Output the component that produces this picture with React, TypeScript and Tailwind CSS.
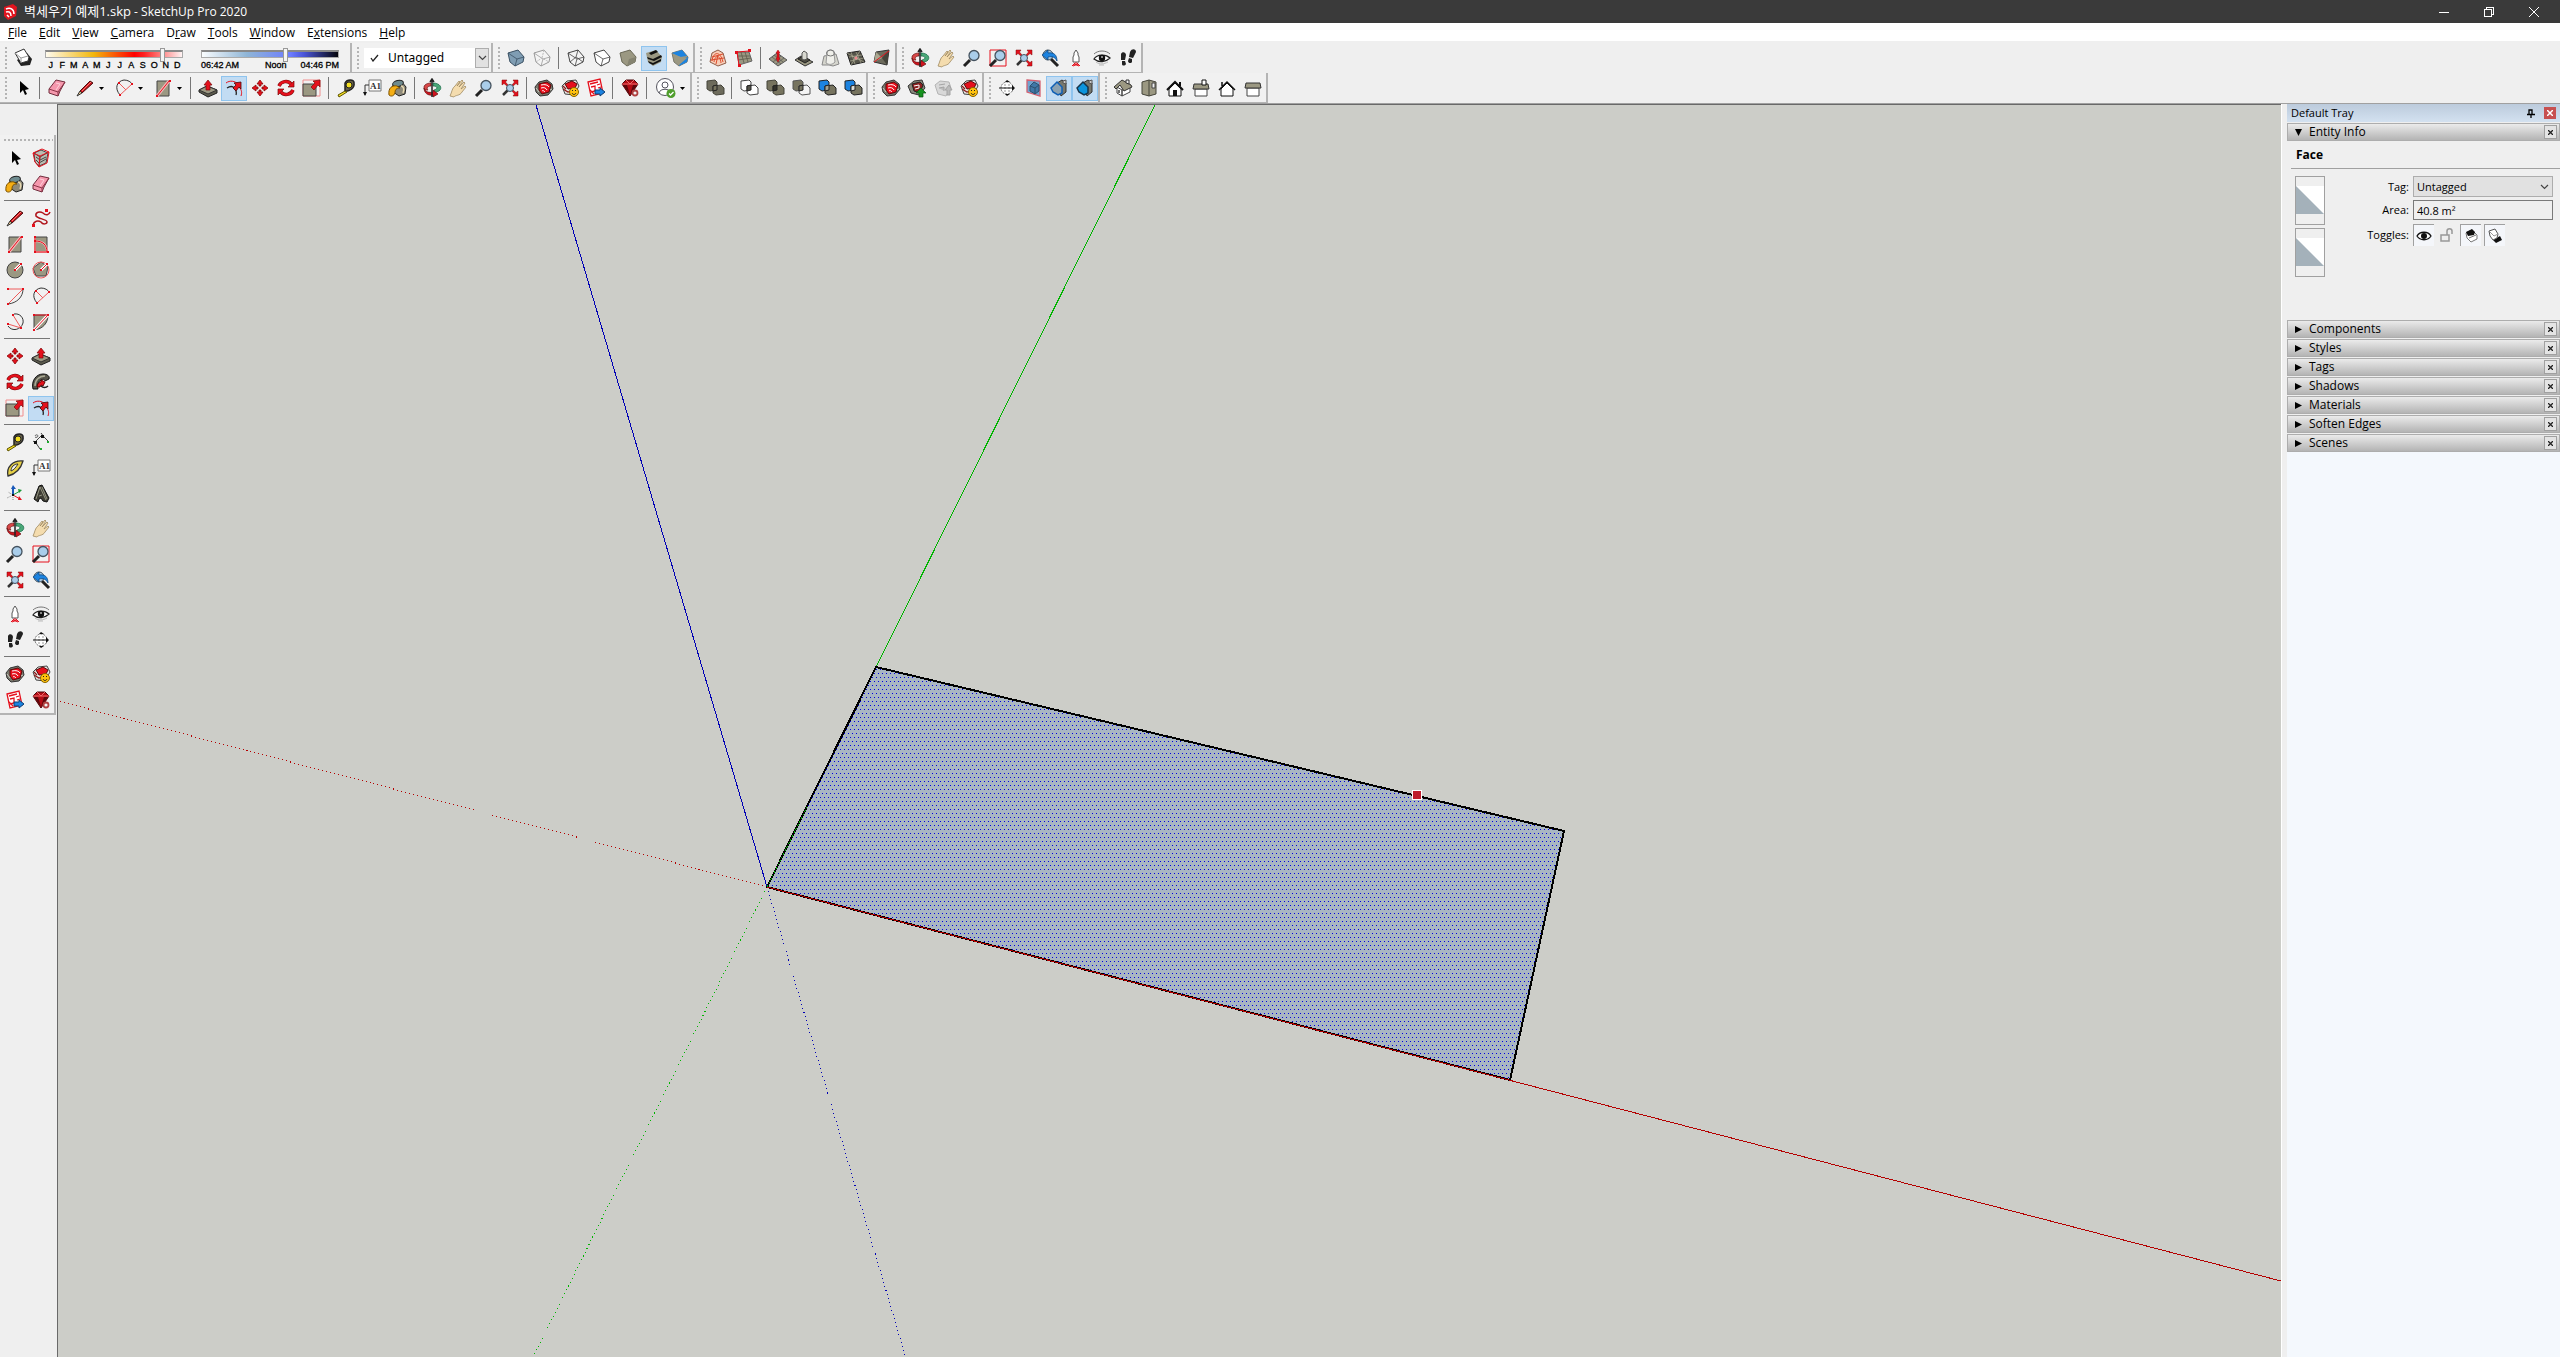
import { Fragment, ReactNode } from "react";
import { clsx } from "clsx";

const OLIVE = "#9b9882";
const RED = "#e5101c";

const warehouseRed = (
	<>
		<path d="M1 9l4-5 8-2 5 4 1 5-5 6-8 1-4-4z" fill="#77776c" stroke="#333" />
		<path d="M5 6l8-2 4 3-2 7-7 2-3-4z" fill={RED} stroke="#5c0a0a" />
		<path d="M7 7c4-1 7 0 8 2M7 10c3-1 5 0 6 2M8 13c1-1 2 0 3 1" stroke="#fff" />
		<path d="M2 10l3 4M16 12l2-1" stroke="#c9c9be" />
	</>
);

const smiley = (
	<>
		<circle cx="14" cy="14" r="4.5" fill="#ffc20e" stroke="#8a6500" />
		<path d="M12 15c1 2 3 2 4 0M12.500 12v1M15.500 12v1" stroke="#222" />
	</>
);

const lens = (
	<>
		<path d="M2 18l6-6" stroke="#222" strokeWidth="3" />
		<circle cx="12" cy="7.500" r="5" fill="#a9cdea" stroke="#44525e" strokeWidth="1.3" />
	</>
);

const cube = (fill: string, stroke: string) => (
	<>
		<path d="M2 5l10-3 6 7-1 5-8 4-5-4z" fill={fill} stroke={stroke} />
		<path d="M18 9l-7 2-2 7M11 11L2 5" stroke={stroke} strokeWidth="0.800" />
	</>
);

const solids = (back: string, front: string, middle: string, stroke: string) => (
	<>
		<path d="M2 3l8-1 2 2v8l-7 1-3-2z" fill={back} stroke={stroke} />
		<path d="M8 8l8-1 3 3v6l-8 1-3-2z" fill={front} stroke={stroke} />
		<path d="M8 8l4-1v5l-4 1z" fill={middle} stroke="#222" />
	</>
);

const houseCut = (fill: string, side: string) => (
	<>
		<path d="M8 5l5-3 4 3v9l-5 4z" fill="#77776c" stroke="#333" />
		<path d="M14 3l3-1v4l-3-1z" fill="#ccc" stroke="#555" />
		<path d="M2 10l6-6 5 5v6l-4 2-5-3z" fill={fill} stroke={side} strokeWidth="1.500" />
	</>
);

const icons: Record<string, ReactNode> = {
	shadow: (
		<>
			<path d="M4 12l10-7 5 6-2 6-9 1z" fill="#222" />
			<path d="M2 5l9-4 5 8-1 4-7 2z" fill="#fff" stroke="#333" />
			<path d="M2 5l6 5 7-2M8 10v5" stroke="#999" />
		</>
	),
	select: <path d="M7 3v12l3-3 2 5 2-1-2-4 4-1z" fill="#000" />,
	component: (
		<>
			<path d="M3 5l7-3 7 3-2 10-7 3-4-4z" fill="#bcbcb2" stroke="#444" />
			<path d="M3 5l6 4M16 5l-7 4-1 9M5 9l4 3 6-3M5 12l3 3 7-4" stroke="#444" />
			<path d="M2 5l9-4 7 3-2 11-8 4-4-5zM2 5l7 3 9-4M9 8l-1 11" stroke={RED} />
		</>
	),
	paint: (
		<>
			<path d="M5 7l8-4 5 6-1 7-6 2-6-4z" fill="#8d897a" stroke="#222" />
			<ellipse cx="10" cy="5.500" rx="5.500" ry="3" fill="#6e8b8f" stroke="#222" transform="rotate(-15 10 5.500)" />
			<path d="M1 17c-1-7 3-10 8-9l3 2c-4 0-5 2-5 5-1 3-4 4-6 2z" fill="#f5ae14" stroke="#7b5100" />
			<path d="M13 8c2 0 4 3 2 7" stroke="#e8d9b0" strokeWidth="1.500" />
		</>
	),
	eraser: (
		<>
			<path d="M9 2l9 2-5 9-2 5-9-3v-4z" fill="#f598ad" stroke="#702c3c" />
			<path d="M2 11l9 3 7-10M11 14v4" stroke="#8b3347" />
			<path d="M9 5l4 1-4 6" stroke="#ffd0da" />
		</>
	),
	pencil: (
		<>
			<path d="M5 13L15 3l3 2L7 15z" fill="#c8141e" stroke="#4b1010" />
			<path d="M2 18l3-5 2 2z" fill="#e8c58f" stroke="#333" />
			<path d="M7 13l9-9" stroke="#ff7a72" />
		</>
	),
	freehand: (
		<>
			<path d="M2 17c1-4 5-5 8-3 2 3 6 2 6 0 0-3-9-3-11-6-1-4 4-5 7-3 3 3 6 2 7-1" stroke="#b0151c" strokeWidth="1.500" />
			<path d="M1 16h3v3H1zM14 1h3v3h-3z" fill={RED} />
		</>
	),
	rect: (
		<>
			<path d="M4 3h12v15H4z" fill={OLIVE} stroke="#444" />
			<path d="M4 18L16 3" stroke="#f3b7b7" strokeWidth="3" />
			<path d="M4 18L16 3" stroke={RED} />
			<path d="M3 17h2v2H3zM16 2h2v2h-2z" fill={RED} />
		</>
	),
	rotrect: (
		<>
			<path d="M4 3h12v15H4z" fill={OLIVE} stroke="#444" />
			<path d="M4 3v15h13M4 7c8 0 12 4 12 11M4 7v11" stroke="#f3b7b7" strokeWidth="2" />
			<path d="M4 3v15h13M4 7c8 0 12 4 12 11" stroke={RED} />
			<path d="M3 2h2v2H3zM3 6h2v2H3zM3 17h2v2H3zM16 17h2v2h-2z" fill={RED} />
		</>
	),
	circle: (
		<>
			<circle cx="10" cy="10" r="8" fill={OLIVE} stroke="#444" />
			<path d="M10 10l6-6" stroke="#fff" strokeWidth="3" />
			<path d="M10 10l6-6" stroke={RED} />
			<path d="M9 9h2v2H9zM15 3h2v2h-2z" fill={RED} />
		</>
	),
	polygon: (
		<>
			<path d="M10 2l7 5-2 9H5L2 8z" fill={OLIVE} stroke="#444" />
			<circle cx="10" cy="10" r="8" stroke="#ee5a5a" />
			<path d="M10 10l6-6" stroke="#fff" strokeWidth="3" />
			<path d="M10 10l6-6" stroke={RED} />
			<path d="M9 9h2v2H9zM15 3h2v2h-2z" fill={RED} />
		</>
	),
	arc2: (
		<>
			<path d="M18 3c0 8-6 14-15 15" stroke="#444" />
			<path d="M3 3h15L3 18" stroke="#ee5a5a" />
			<path d="M2 2h2v2H2zM17 2h2v2h-2zM2 17h2v2H2z" fill={RED} />
		</>
	),
	arc: (
		<>
			<path d="M6 17C0 10 3 3 10 2c4 0 7 2 8 4" stroke="#333" />
			<path d="M6 17L18 6M5 5l7 7" stroke="#ee5a5a" />
			<path d="M5 16h2v2H5zM17 5h2v2h-2zM4 4h2v2H4z" fill={RED} />
		</>
	),
	arc3: (
		<>
			<path d="M9 2c6-1 10 4 9 9-2 7-11 9-15 3" stroke="#333" />
			<path d="M3 12l13 4L8 3" stroke="#ee5a5a" />
			<path d="M2 11h2v2H2zM7 2h2v2H7zM15 15h2v2h-2z" fill={RED} />
		</>
	),
	pie: (
		<>
			<path d="M3 3h14c0 8-5 14-14 15z" fill={OLIVE} stroke="#444" />
			<path d="M3 18L17 3" stroke="#fff" strokeWidth="3" />
			<path d="M3 3h14L3 18" stroke={RED} />
			<path d="M2 2h2v2H2zM16 2h2v2h-2zM2 17h2v2H2z" fill={RED} />
		</>
	),
	move: (
		<path
			d="M10 2l3 4h-2v2H9V6H7zM10 18l3-4h-2v-2H9v2H7zM2 10l4-3v2h2v2H6v2zM18 10l-4-3v2h-2v2h2v2z"
			fill={RED}
			stroke="#8c0a0a"
			strokeWidth="0.800"
		/>
	),
	pushpull: (
		<>
			<path d="M1 12l8-4 10 4v3l-9 4-9-5z" fill="#5b5a4c" stroke="#222" />
			<path d="M1 12l8-4 10 4-9 4z" fill={OLIVE} stroke="#333" />
			<path d="M10 2l4 5h-2v5H8V7H6z" fill={RED} stroke="#7a0a0a" strokeWidth="0.700" />
		</>
	),
	rotate: (
		<>
			<path d="M3 8c2-5 9-6 12-2M17 12c-2 5-9 6-12 2" stroke="#7a0a0a" strokeWidth="3.500" />
			<path d="M18 3v6h-6zM2 17v-6h6z" fill={RED} stroke="#7a0a0a" strokeWidth="0.700" />
			<path d="M3 8c2-5 9-6 12-2M17 12c-2 5-9 6-12 2" stroke={RED} strokeWidth="2.300" />
		</>
	),
	followme: (
		<>
			<path d="M2 17C0 9 5 2 12 2c4 0 7 2 6 5l-4 2c0-2-2-2-4-1-3 2-4 5-3 9z" fill="#55544a" stroke="#111" />
			<path d="M4 14C4 8 8 4 14 4" stroke="#aaa994" strokeWidth="1.500" />
			<path d="M6 15c0-3 2-5 4-5V8l4 2-2 4-2-1-1 2z" fill={RED} stroke="#600" />
			<path d="M10 14c2 2 5 2 7 0" stroke="#222" strokeWidth="1.500" />
		</>
	),
	scale: (
		<>
			<path d="M1 2h17v16H1z" stroke="#f08d8d" />
			<path d="M1 6h13v12H1z" fill={OLIVE} stroke="#444" />
			<path d="M18 2v7l-2-2-4 5-3-3 4-4-2-2z" fill={RED} stroke="#7a0a0a" strokeWidth="0.700" />
		</>
	),
	offset: (
		<>
			<path d="M2 5c4-3 9-2 12 1M15 9c3 3 3 6 2 9" stroke={RED} />
			<path d="M3 10c3-2 6-2 7 0 2 2 3 4 2 7" stroke="#222" strokeWidth="1.300" />
			<path d="M17 4v7l-2-2-3 4-3-3 3-3-2-2z" fill={RED} stroke="#4c0808" strokeWidth="0.800" />
		</>
	),
	tape: (
		<>
			<path d="M9 5c2-4 9-4 9 0 1 5-5 9-9 8z" fill="#66604a" stroke="#222" strokeWidth="1.500" />
			<circle cx="13" cy="7" r="3" fill="#f4df22" stroke="#222" />
			<path d="M2 17l7-4 2 1-8 5z" fill="#f4df22" stroke="#5c5200" />
		</>
	),
	dimension: (
		<>
			<path d="M4 10l7-7M2 9l4 3M10 1l3 4M5 11l4 6M12 4l5 5" stroke="#444" />
			<path d="M3 9h3v3H3zM10 3h3v3h-3z" fill="#111" />
			<path d="M9 16h2v2H9zM16 9h2v2h-2z" fill="#1faa30" />
			<path d="M4 4c1-2 3-1 3 0s-2 2-3 1" stroke="#555" />
		</>
	),
	protractor: (
		<>
			<path d="M3 18C1 9 8 2 18 3c-2 7-7 13-15 15z" fill="#e5cf45" stroke="#333" strokeWidth="1.300" />
			<path d="M6 13c0-4 3-7 7-7-2 3-4 6-7 7z" fill="#f1f1f1" stroke="#333" />
		</>
	),
	text: (
		<>
			<path d="M7 2h12v11H7z" fill="#fff" stroke="#777" />
			<path d="M7 7H3v10" stroke="#333" />
			<path d="M1 14h4l-2 4z" fill="#111" />
			<text x="8" y="11" fontSize="9" fontFamily="Liberation Serif" fontWeight="700" fill="#333">
				A1
			</text>
		</>
	),
	axes: (
		<>
			<path d="M8 11V4" stroke="#1959b8" strokeWidth="2" />
			<path d="M6 5l2-4 3 4z" fill="#1959b8" />
			<path d="M8 11l7-4" stroke="#1a9a37" />
			<path d="M8 11l7 4" stroke={RED} />
			<path d="M8 11l-6 3M8 11L3 8M8 11v6" stroke="#888" strokeDasharray="1 1" />
			<path d="M13 5l4 1-3 3z" fill="#1a9a37" />
			<path d="M14 12l3 4h-4z" fill={RED} />
			<path d="M7 10h2v2H7z" fill="#111" />
		</>
	),
	text3d: (
		<>
			<path d="M3 15L8 2l3-1 7 13-2 4-4-1-2-3-2 1-1 3z" fill="#3f3e35" stroke="#111" />
			<path d="M5 15L9 3l6 13M8 12l3-1M11 3l5 12" stroke="#aaa994" strokeWidth="0.800" />
		</>
	),
	orbit: (
		<>
			<path d="M3 12c-3-4 1-7 6-7v3c-3 0-5 2-3 4z" fill="#d84848" stroke="#611" strokeWidth="0.700" />
			<path d="M11 5c7 0 10 5 6 8l-5 2v-3c4-1 4-4-1-4z" fill="#4aa878" stroke="#164" strokeWidth="0.700" />
			<path d="M2 10c1 4 5 5 9 4v-2l5 4-5 3v-2C6 18 2 15 2 10z" fill="#d0141e" stroke="#611" strokeWidth="0.700" />
			<path d="M10 2v17M8 4l2-3 2 3" stroke="#222" strokeWidth="1.500" />
		</>
	),
	pan: (
		<path
			d="M2 18c2-4 2-8 5-10l4-5 1 1-3 4 5-6 1 1-4 6 5-5 1 1-4 6 4-3 1 1-4 5c-2 4-7 3-8 5z"
			fill="#f4dcae"
			stroke="#a08a62"
			strokeWidth="0.800"
		/>
	),
	zoom: lens,
	zoomwindow: (
		<>
			<path d="M2 2h16v16H2z" stroke={RED} />
			{lens}
		</>
	),
	zoomextents: (
		<>
			<path d="M3 17l5-5" stroke="#333" strokeWidth="2.500" />
			<path d="M2 2h5L5.500 4 8 7 7 8 4 5.500 2 7zM18 2h-5l1.500 2L12 7l1 1 3-2.500L18 7zM18 18h-5l1.500-2L12 13l1-1 3 2.500 2-1.500z" fill={RED} stroke="#7a0a0a" strokeWidth="0.500" />
			<circle cx="10" cy="10" r="3.500" fill="#a9cdea" stroke="#44525e" />
		</>
	),
	previous: (
		<>
			<path d="M11 11l7 7" stroke="#222" strokeWidth="3" />
			<circle cx="8" cy="7" r="5" fill="#a9cdea" stroke="#44525e" />
			<path d="M2 7l6-5v3c6-1 9 2 9 8-2-4-5-5-9-4v3z" fill="#1c83e0" stroke="#0b4176" strokeWidth="0.700" />
		</>
	),
	position: (
		<>
			<path d="M10 2l2 3v2l1 2v5H7V9l1-2V5z" fill="#fff" stroke="#555" />
			<path d="M6 18l3-3h2l3 3M8 16l5 2M12 16l-5 2" stroke={RED} />
		</>
	),
	look: (
		<>
			<path d="M2 6c4-4 12-4 16 0" stroke="#777" />
			<path d="M2 11c3-5 12-5 16-1-4 4-11 5-16 1z" fill="#fff" stroke="#222" strokeWidth="1.300" />
			<circle cx="10" cy="10" r="3.200" fill="#111" />
			<path d="M4 14c4 3 8 2 12 0M7 17h5" stroke="#bbb" />
			<path d="M9 9h2" stroke="#fff" />
		</>
	),
	walk: (
		<path
			d="M3 6c1-3 5-2 5 1l-1 5H3zM4 13h3l1 3c-1 2-4 2-4 0zM12 4c2-4 6-3 6 0l-3 6-4-1zM11 10l3 1v3c-1 2-4 1-4-1z"
			fill="#222"
		/>
	),
	section: (
		<>
			<circle cx="10" cy="10" r="6" fill="#fff" stroke="#666" strokeDasharray="2 1" />
			<path d="M8 6v8M12 6v8" stroke="#999" strokeDasharray="2 1" />
			<path d="M2 10h15" stroke="#111" />
			<path d="M15 7l3 3-3 3zM8 4l2-2 3 2zM8 16l2 2 3-2z" fill="#111" />
		</>
	),
	warehouse: warehouseRed,
	extension: (
		<>
			<path d="M2 8l5-5 9-1 3 6-5 9-9-1z" fill="#e4e4e0" stroke="#444" />
			<path d="M5 6l7-3 5 3-2 4-7 1z" fill={RED} stroke="#5c0a0a" />
			<path d="M3 11l5 3 3-1M3 8l3 3" stroke="#8c1a1a" strokeWidth="1.300" />
			{smiley}
		</>
	),
	layout: (
		<>
			<path d="M2 4l12-3 3 14-12 3z" fill="#fff" stroke={RED} strokeWidth="1.300" />
			<path d="M4 6l8-2M5 9l4-1v5l-4 1M11 7l3-1M12 10l3-1M4 12l4 4" stroke={RED} strokeWidth="1.300" />
			<path d="M9 12h5v-2l5 4-5 4v-2H9z" fill="#1c83e0" stroke="#0b4176" />
		</>
	),
	ruby: (
		<>
			<path d="M2 6l4-4h8l4 4-8 12z" fill="#b40d16" stroke="#4d0508" />
			<path d="M2 6h16M6 2l4 4 4-4" stroke="#f16b6b" />
			<path d="M3 7h4l3 10zM13 7h4l-7 10z" fill="#5e070b" />
			<circle cx="15" cy="15" r="2.500" fill="#f1f1f1" stroke="#b04040" strokeWidth="1.800" />
		</>
	),
	user: (
		<>
			<circle cx="9" cy="9" r="8.500" fill="#fff" stroke="#55555f" />
			<circle cx="9" cy="7" r="3" stroke="#55555f" />
			<path d="M3 15c1-5 11-5 12 0" stroke="#55555f" />
			<circle cx="15" cy="15.500" r="4.500" fill="#4f9e2c" />
			<path d="M13 15.500l1.500 1.500 3-3" stroke="#fff" strokeWidth="1.300" />
		</>
	),
	xray: cube("#7f9db3", "#3b5163"),
	backedges: (
		<>
			{cube("#f4f4f4", "#999")}
			<path d="M4 14l6-4 7 4M12 2l-2 8" stroke="#bbb" strokeDasharray="2 1" />
		</>
	),
	wireframe: (
		<>
			{cube("#f4f4f4", "#444")}
			<path d="M4 14l6-5 7 5M12 2l-2 7" stroke="#444" strokeWidth="0.800" />
		</>
	),
	hidden: cube("#fff", "#444"),
	shaded: (
		<>
			<path d="M2 5l10-3 6 7-1 5-8 4-5-4z" fill={OLIVE} stroke="#6a6857" />
			<path d="M18 9l-7 2-2 7 8-4z" fill="#858370" />
		</>
	),
	textured: (
		<>
			<path d="M2 5l10-3 6 7-1 5-8 4-5-4z" fill={OLIVE} />
			<path d="M5 5l7-3 2 2-7 3zM3 9l6 2 8-4 1 2-8 4-6-2zM4 13l5 2 8-4v2l-8 4-4-2z" fill="#111" />
		</>
	),
	mono: (
		<>
			<path d="M2 5l10-3 6 7-1 5-8 4-5-4z" fill={OLIVE} stroke="#77776c" />
			<path d="M2 5l10-3 5 6-7 1z" fill="#1c83e0" />
			<path d="M18 9l-7 2-2 7 8-4z" fill="#1c83e0" />
			<path d="M3 6l8 3 6 1-8 7-4-3z" fill={OLIVE} />
		</>
	),
	contours: (
		<>
			<path d="M2 14l2-9 6-3 5 3 3 10-8 3z" fill="#f7cdb7" stroke="#8f5c48" />
			<path d="M4 13c1-9 8-11 11 1M6 14c1-7 6-8 7 1M4 9l11-3M3 12l13-2M8 16l2-9" stroke="#dc4a2a" />
		</>
	),
	scratch: (
		<>
			<path d="M3 4h12l3 9-13 4z" fill={OLIVE} stroke="#666" />
			<path d="M7 4l3 11M11 4l3 10M4 8h12M4 12l13-2" stroke="#5e5c4d" strokeWidth="0.800" />
			<path d="M5 17L3 4l12-1" stroke={RED} />
			<path d="M1 3h3v3H1zM14 1h3v3h-3zM4 16h3v3H4z" fill={RED} />
		</>
	),
	smoove: (
		<>
			<path d="M1 11l8-6 10 7-9 6z" fill={OLIVE} stroke="#555" />
			<path d="M4 9l9 7M6 7l9 7M5 14l8-6M8 16l8-6" stroke="#555" strokeWidth="0.700" />
			<path d="M10 2l2 3h-1v5h1l-2 4-2-4h1V5H8z" fill={RED} stroke="#a00a0a" strokeWidth="0.500" />
		</>
	),
	stamp: (
		<>
			<path d="M1 12l6-4 12 6-8 4z" fill={OLIVE} stroke="#333" />
			<path d="M4 11l5-3 7 4-5 3z" fill="#4d4b40" stroke="#222" />
			<path d="M8 11V5l2-2 3 2v6l-3 1z" fill="#d8d8d0" stroke="#555" />
		</>
	),
	drape: (
		<>
			<path d="M2 17l2-9 12-2 3 10-6 2-4-1z" fill="#d5d5cd" stroke="#888" />
			<path d="M6 15l1-10c1-4 6-4 7 0l1 9c-3 3-6 3-9 1z" fill="#efefea" stroke="#999" />
			<ellipse cx="10.500" cy="5" rx="4" ry="3" stroke="#777" />
		</>
	),
	adddetail: (
		<>
			<path d="M1 5l13-2 5 11-14 3z" fill="#55544a" stroke="#222" />
			<path d="M3 9l13-2M4 13l14-3M5 4l4 12M10 4l5 11M1 5l17 9M14 3L5 17" stroke="#b7b59c" strokeWidth="0.600" />
			<path d="M9 9h2v2H9z" fill={RED} stroke="#f0b0b0" />
		</>
	),
	flip: (
		<>
			<path d="M4 4l13-2-2 15-13-3z" fill="#6d6b5c" stroke="#333" />
			<path d="M4 4l6 6-8 4z" fill="#aaa78f" />
			<path d="M17 2l-2 15-5-7z" fill="#45443a" />
			<path d="M2 14L17 3" stroke={RED} />
		</>
	),
	outer: solids("#6d6b5c", "#6d6b5c", "#77745f", "#45443a"),
	intersect: solids("#fff", "#fff", "#55544a", "#444"),
	union: solids("#77745f", "#77745f", "#33322b", "#45443a"),
	subtract: solids("#77745f", "#f4f4f4", "#77745f", "#555"),
	trim: solids("#1c83e0", "#77745f", "#a5a390", "#222"),
	split: solids("#1c83e0", "#77745f", "#e0e0d8", "#222"),
	sharemodel: (
		<>
			<path d="M1 8l6-5 8-1 3 8-6 7-8-2z" fill="#88877b" stroke="#333" />
			<path d="M5 6l8-2 3 3-3 8-6-2z" fill="#8b2020" stroke="#222" />
			<path d="M7 8l5-1v3l-4 1" stroke="#fff" />
			<path d="M14 10l5 5h-3v4h-4v-4h-3z" fill="#16931f" stroke="#0c4f11" strokeWidth="0.700" />
		</>
	),
	sharecomponent: (
		<>
			<path d="M2 7l5-4 9 1 2 6-5 8-8-2z" fill="#d8d8d8" stroke="#b4b4b4" />
			<path d="M6 7l6-1M6 10l5-1v4M14 17v-5h-2l4-5 3 5h-2v5z" fill="#bbb" stroke="#a4a4a4" />
		</>
	),
	planes: (
		<>
			<path d="M4 2l13 1v15L4 14z" fill="#6fa3cf" stroke="#d36070" strokeWidth="1.300" />
			<path d="M7 8l4-4 5 3v6l-4 3-5-3z" fill="#3f77a6" stroke="#2d506e" />
			<path d="M7 8l5 2v6M12 10l4-3" stroke="#2d506e" />
		</>
	),
	cuts: houseCut("#8ba1b0", "#0f5fb5"),
	cutfill: houseCut("#0c94dc", "#17344a"),
	iso: (
		<>
			<path d="M4 9l5 3v6l-5-3zM9 12l8-3v5l-8 4z" fill="#fff" stroke="#444" />
			<path d="M1 9l8-7 9 5 1 2-8 4-4-6-4 4z" fill={OLIVE} stroke="#333" />
			<path d="M13 2h3v4l-3-1z" fill="#eee" stroke="#333" />
			<path d="M6 12v3" stroke="#444" strokeWidth="1.500" />
		</>
	),
	top: (
		<>
			<path d="M3 4l7-2 7 2v12l-7 2-7-2z" fill={OLIVE} stroke="#45443a" />
			<path d="M10 2v16" stroke="#45443a" />
			<path d="M13 5h3v5h-3z" fill="#eee" stroke="#444" />
		</>
	),
	front: (
		<>
			<path d="M4 11l6-6 6 6v7H4z" fill="#fff" stroke="#111" />
			<path d="M2 12l8-8 8 8" stroke="#111" strokeWidth="2" />
			<path d="M8 12h4v6H8zM14 4h2v4h-2z" fill="#111" />
		</>
	),
	right: (
		<>
			<path d="M4 11h12v7H4z" fill="#fff" stroke="#444" />
			<path d="M3 6h14l1 5H2z" fill={OLIVE} stroke="#333" />
			<path d="M11 2h4v5h-4z" fill="#fff" stroke="#111" />
		</>
	),
	back: (
		<>
			<path d="M4 11l6-6 6 6v7H4z" fill="#fff" stroke="#111" />
			<path d="M2 12l8-8 8 8M5 8V4" stroke="#111" strokeWidth="1.500" />
		</>
	),
	left: (
		<>
			<path d="M4 10h12v8H4z" fill="#fff" stroke="#444" />
			<path d="M3 5h14l1 5H2z" fill={OLIVE} stroke="#333" />
		</>
	),
};

// "|" is a separator, "!" marks the active tool, "+" a tool with a menu
const rowTwoTools = [
	"select | eraser pencil+ arc+ rect+ | pushpull offset! move rotate scale | tape text paint | orbit pan zoom zoomextents | warehouse extension layout | ruby | user+",
	"outer | intersect union subtract trim split",
	"warehouse sharemodel sharecomponent extension",
	"section planes cuts! cutfill!",
	"iso top front right back left",
];

const rowOneTools = [
	"xray backedges | wireframe hidden shaded textured! mono",
	"contours scratch | smoove stamp drape adddetail flip",
	"orbit pan zoom zoomwindow zoomextents previous position look walk",
];

const sideTools = [
	"select component paint eraser",
	"pencil freehand rect rotrect circle polygon arc2 arc arc3 pie",
	"move pushpull rotate followme scale offset!",
	"tape dimension protractor text axes text3d",
	"orbit pan zoom zoomwindow zoomextents previous",
	"position look walk section",
	"warehouse extension layout ruby",
];

const menus = [
	["", "F", "ile"],
	["", "E", "dit"],
	["", "V", "iew"],
	["", "C", "amera"],
	["D", "r", "aw"],
	["", "T", "ools"],
	["", "W", "indow"],
	["E", "x", "tensions"],
	["", "H", "elp"],
];

const panels = ["Components", "Styles", "Tags", "Shadows", "Materials", "Soften Edges", "Scenes"];

const gripDots = "bg-[radial-gradient(#b4b4b4_1px,transparent_1px)] bg-[size:4px_4px]";

function Tool({ tool }: { tool: string }) {
	const name = tool.replace(/[+!]/, "");
	const active = tool.endsWith("!");
	const menu = tool.endsWith("+");
	return (
		<button
			type="button"
			aria-label={name}
			aria-pressed={active}
			className={clsx(
				"flex h-[25px] shrink-0 items-center justify-center",
				menu ? "w-[39px] gap-1" : "w-[26px]",
				active && "border border-[#8fc4ee] bg-[#c2dcf3]"
			)}
		>
			<svg width="20" height="20" viewBox="0 0 20 20" fill="none" className="shrink-0">
				{icons[name]}
			</svg>
			{menu && (
				<svg width="5" height="3" viewBox="0 0 5 3">
					<path d="M0 0h5L2.500 3z" />
				</svg>
			)}
		</button>
	);
}

function ToolGroup({ children }: { children: ReactNode }) {
	return (
		<div className="flex h-[30px] items-center border-r-2 border-b border-[#b4b4b4] bg-[#f1f1f1] pt-px">
			<div className={clsx("mr-[2px] ml-1 h-[25px] w-1 shrink-0", gripDots)} />
			{children}
		</div>
	);
}

function Tools({ list }: { list: string }) {
	return (
		<ToolGroup>
			{list.split(" ").map((tool, i) =>
				tool === "|" ? (
					<div key={i} className="mr-1 ml-[3px] h-[22px] w-px bg-[#777]" />
				) : (
					<Tool key={i} tool={tool} />
				)
			)}
		</ToolGroup>
	);
}

interface ISunSliderProps {
	label: string;
	value: number;
	track: string;
	children: ReactNode;
}

function SunSlider({ label, value, track, children }: ISunSliderProps) {
	return (
		<div className="flex w-[138px] flex-col gap-[2px]">
			<input
				type="range"
				aria-label={label}
				defaultValue={value}
				className={clsx(
					"h-2 w-full appearance-none border border-t-2 border-[#aaa] border-t-[#888]",
					"[&::-webkit-slider-thumb]:h-[14px] [&::-webkit-slider-thumb]:w-[5px] [&::-webkit-slider-thumb]:appearance-none [&::-webkit-slider-thumb]:border [&::-webkit-slider-thumb]:border-[#999] [&::-webkit-slider-thumb]:bg-[#f4f4f4]",
					track
				)}
			/>
			<div className="flex h-[10px] justify-between font-['Liberation_Sans',sans-serif] text-[9px] leading-[10px] [-webkit-text-stroke:0.3px_#000]">
				{children}
			</div>
		</div>
	);
}

function Chevron() {
	return (
		<svg width="9" height="6" viewBox="0 0 9 6" fill="none" className="pointer-events-none">
			<path d="M1 1l3.500 3.500L8 1" stroke="#444" strokeWidth="1.200" />
		</svg>
	);
}

function PanelHeader({ title, open }: { title: string; open?: boolean }) {
	return (
		<div className="flex h-[18px] items-center border border-[#adadad] bg-linear-to-b from-[#ebebeb] to-[#b4b4b4] pr-[2px]">
			<button type="button" aria-expanded={!!open} className="flex flex-1 items-center gap-[7px] pl-[7px] text-[12px] leading-4">
				<svg width="7" height="7" viewBox="0 0 7 7">
					<path d={open ? "M0 0h7L3.500 7z" : "M0 0l7 3.500L0 7z"} />
				</svg>
				{title}
			</button>
			<button
				type="button"
				aria-label={`Close ${title}`}
				className="flex h-[14px] w-[13px] items-center justify-center border border-[#a0a0a0] bg-[#e4e4e4]"
			>
				<svg width="5" height="5" viewBox="0 0 5 5">
					<path d="M0 0l5 5M5 0L0 5" stroke="#222" strokeWidth="1.300" />
				</svg>
			</button>
		</div>
	);
}

function Swatch({ label }: { label: string }) {
	return (
		<button type="button" aria-label={label} className="h-[49px] w-[30px] border border-[#a0a0a0] bg-[#efefef]">
			<svg width="28" height="47" viewBox="0 0 28 47">
				<path d="M0 9h28v28H0z" fill="#fff" />
				<path d="M0 9l28 28H0z" fill="#a4b1ba" />
			</svg>
		</button>
	);
}

const pressed = "border-t border-l border-[#a0a0a0] bg-[#f4f6fa] px-[2px]";

function EntityInfo() {
	return (
		<div className="flex h-[179px] flex-col pl-1">
			<h2 className="flex h-7 items-center border-b border-[#a0a0a0] pl-[5px] text-[12px] font-bold">Face</h2>
			<div className="flex items-start pt-[7px] pr-[7px] pl-1">
				<div className="flex flex-col gap-[3px]">
					<Swatch label="Front material" />
					<Swatch label="Back material" />
				</div>
				<div className="ml-auto grid grid-cols-[auto_140px] items-center gap-x-1 gap-y-[3px] text-right text-[11px] leading-4">
					<label htmlFor="tag">Tag:</label>
					<div className="relative flex h-[21px] items-center">
						<select
							id="tag"
							className="h-full w-full appearance-none border border-[#adadad] bg-[#e1e1e1] pl-[3px] text-left"
						>
							<option>Untagged</option>
						</select>
						<div className="pointer-events-none absolute right-1">
							<Chevron />
						</div>
					</div>
					<label htmlFor="area">Area:</label>
					<input
						id="area"
						readOnly
						defaultValue="40.8 m²"
						className="h-5 w-full border border-[#7a7a7a] bg-[#efefef] pl-[3px]"
					/>
					<span>Toggles:</span>
					<div className="mt-px flex h-[22px] gap-[3px]">
						<button type="button" aria-label="Hide" className={pressed}>
							<svg width="16" height="16" viewBox="0 0 16 16" fill="none">
								<path d="M1 8c3-5 11-5 14 0-3 5-11 5-14 0z" fill="#fff" stroke="#111" strokeWidth="1.300" />
								<circle cx="8" cy="8" r="3" fill="#111" />
							</svg>
						</button>
						<button type="button" aria-label="Lock" className="px-[2px]">
							<svg width="16" height="16" viewBox="0 0 16 16" fill="none">
								<path d="M2 8h8v6H2zM8 8V4c0-3 5-3 5 0v3" stroke="#999" strokeWidth="1.500" />
							</svg>
						</button>
						<button type="button" aria-label="Receive shadows" className={pressed}>
							<svg width="16" height="16" viewBox="0 0 16 16" fill="none">
								<path d="M3 5l6-3 5 5v4l-6 3-4-4z" fill="#fff" stroke="#777" />
								<path d="M3 4l6-3 3 3-1 3-6 1z" fill="#111" />
								<path d="M6 10l7-3" stroke="#777" />
							</svg>
						</button>
						<button type="button" aria-label="Cast shadows" className={pressed}>
							<svg width="16" height="16" viewBox="0 0 16 16" fill="none">
								<path d="M6 12l7-4 2 4-6 3z" fill="#111" />
								<path d="M2 3l6-2 3 5-1 4-4 2-3-4z" fill="#fff" stroke="#555" />
								<path d="M3 4l4 4 4-2" stroke="#999" />
							</svg>
						</button>
					</div>
				</div>
			</div>
		</div>
	);
}

function Viewport() {
	return (
		<main className="relative min-w-0 flex-1 overflow-hidden border-t border-l border-[#696969] bg-[#cccdc8]">
			<svg className="absolute inset-0 h-full w-full" fill="none" shapeRendering="crispEdges">
				<defs>
					<pattern id="selected" width="4" height="8" patternUnits="userSpaceOnUse">
						<rect width="4" height="8" fill="#a9b6c2" />
						<path d="M0 0h1v1H0zM2 4h1v1H2z" fill="#0000e0" />
					</pattern>
				</defs>
				<path d="M709 782L0 596" stroke="#b40000" strokeDasharray="1 3.100" />
				<path d="M709 782L475 1252" stroke="#00b400" strokeDasharray="1 3.200" />
				<path d="M709 782l138 468" stroke="#0000b4" strokeDasharray="1 3.200" />
				<path d="M709 782L478 0" stroke="#0000b4" />
				<path d="M709 782L1097 0" stroke="#00b400" />
				<path d="M709 782l109-220 688 164-54 249z" fill="url(#selected)" stroke="#000" strokeWidth="2" />
				<path d="M709 782l1514 394" stroke="#b40000" />
				<path d="M709 782l40-80" stroke="#00b400" strokeDasharray="2 2" />
				<path d="M1354 685h10v10h-10z" fill="#fff" />
				<path d="M1355 686h8v8h-8z" fill="#be1e2d" />
			</svg>
		</main>
	);
}

export default function App() {
	return (
		<div className="flex min-h-screen flex-col bg-[#efefef] font-['Open_Sans','Noto_Sans_CJK_KR',sans-serif] text-[12px] text-black">
			<header className="flex h-[23px] items-center bg-[#3a3a3a] text-white">
				<svg width="14" height="16" viewBox="0 0 14 16" fill="none" className="ml-[3px]">
					<path d="M1 3l9-3 4 3-1 9-8 4-4-4z" fill="#e0141e" />
					<path d="M3 5c4-2 8 0 8 5M3 8c3-1 5 0 5 4M4 11l2 2" stroke="#fff" strokeWidth="1.500" />
				</svg>
				<h1 className="ml-[7px] text-[12px] leading-5">
					<span className="text-[13px]">벽세우기 예제1.skp</span> - SketchUp Pro 2020
				</h1>
				<div className="ml-auto flex pr-1">
					<button type="button" aria-label="Minimize" className="flex h-5 w-[45px] items-center justify-center">
						<svg width="10" height="10" viewBox="0 0 10 10">
							<path d="M0 5h10v1H0z" fill="#fff" />
						</svg>
					</button>
					<button type="button" aria-label="Restore" className="flex h-5 w-[45px] items-center justify-center">
						<svg width="10" height="10" viewBox="0 0 10 10" fill="none" stroke="#fff" shapeRendering="crispEdges">
							<path d="M0.500 2.500h7v7h-7zM2.500 2.500v-2h7v7h-2" />
						</svg>
					</button>
					<button type="button" aria-label="Close" className="flex h-5 w-[45px] items-center justify-center">
						<svg width="10" height="10" viewBox="0 0 10 10" stroke="#fff">
							<path d="M0 0l10 10M10 0L0 10" />
						</svg>
					</button>
				</div>
			</header>
			<nav className="flex h-[18px] items-center gap-3 bg-white pt-px pl-2">
				{menus.map(([before, key, after]) => (
					<button key={after} type="button" className="text-[12px] leading-4">
						{before}
						<u>{key}</u>
						{after}
					</button>
				))}
			</nav>

			<div className="flex pt-[2px]">
				<ToolGroup>
					<Tool tool="shadow" />
					<div className="ml-[9px] flex gap-[18px] pt-1 pr-[11px]">
						<SunSlider
							label="Date"
							value={87}
							track="bg-[linear-gradient(90deg,#fffbee,#f2b70c_35%,#ff0000_65%,#ff2020_72%,#fff4f4)]"
						>
							{"JFMAMJJASOND".split("").map((month, i) => (
								<span key={i} className="flex-1 text-center">
									{month}
								</span>
							))}
						</SunSlider>
						<SunSlider
							label="Time"
							value={62}
							track="bg-[linear-gradient(90deg,#fafdff,#8fb5d6_33%,#6c7cff_65%,#4a55d8_75%,#05050c)]"
						>
							<span>06:42 AM</span>
							<span className="pl-3">Noon</span>
							<span>04:46 PM</span>
						</SunSlider>
					</div>
				</ToolGroup>
				<ToolGroup>
					<div className="relative mx-[2px] flex items-center">
						<svg width="9" height="8" viewBox="0 0 9 8" fill="none" className="absolute left-[6px]">
							<path d="M1 4l2 3 5-6" stroke="#222" strokeWidth="1.300" />
						</svg>
						<select
							aria-label="Active tag"
							className="h-5 w-[125px] appearance-none bg-white pl-6 font-['Noto_Sans',sans-serif] text-[12px]"
						>
							<option>Untagged</option>
						</select>
						<div className="pointer-events-none absolute right-0 flex h-5 w-[14px] items-center justify-center border border-[#adadad] bg-[#e1e1e1]">
							<Chevron />
						</div>
					</div>
				</ToolGroup>
				{rowOneTools.map((list) => (
					<Tools key={list} list={list} />
				))}
			</div>
			<div className="flex">
				{rowTwoTools.map((list) => (
					<Tools key={list} list={list} />
				))}
			</div>

			<div className="flex flex-1 border-t border-[#a0a0a0]">
				<aside className="w-[57px] pt-[31px]">
					<div className="w-[56px] border-r-2 border-b-2 border-[#b4b4b4] bg-[#f1f1f1] pl-[2px]">
						<div className="px-px py-[3px]">
							<div className={clsx("h-1", gripDots)} />
						</div>
						{sideTools.map((list, i) => (
							<Fragment key={list}>
								{i > 0 && <hr className="mt-[3px] mr-1 mb-1 ml-[2px] border-[#777]" />}
								<div className="grid auto-rows-[26px] grid-cols-2 items-center">
									{list.split(" ").map((tool) => (
										<Tool key={tool} tool={tool} />
									))}
								</div>
							</Fragment>
						))}
					</div>
				</aside>
				<Viewport />
				<aside className="flex w-[279px] flex-col border-l border-white pl-[5px]">
					<div className="mb-px flex h-[18px] items-center bg-linear-to-b from-[#bccbdc] to-[#d3e1f0] pr-1 pl-1">
						<h2 className="flex-1 text-[11px]">Default Tray</h2>
						<button type="button" aria-label="Pin" className="mr-[9px]">
							<svg width="8" height="9" viewBox="0 0 8 9" fill="none">
								<path d="M2 5V1h3v4M5 1v4M0 5.500h8M4 6v3" stroke="#000" strokeWidth="1.300" />
							</svg>
						</button>
						<button type="button" aria-label="Close tray" className="flex h-3 w-3 items-center justify-center bg-[#c75050]">
							<svg width="6" height="6" viewBox="0 0 6 6">
								<path d="M0 0l6 6M6 0L0 6" stroke="#fff" strokeWidth="1.500" />
							</svg>
						</button>
					</div>
					<PanelHeader title="Entity Info" open />
					<EntityInfo />
					<div className="flex flex-col gap-px">
						{panels.map((title) => (
							<PanelHeader key={title} title={title} />
						))}
					</div>
					<div className="flex-1 bg-[#f4f8fd]" />
				</aside>
			</div>
		</div>
	);
}
